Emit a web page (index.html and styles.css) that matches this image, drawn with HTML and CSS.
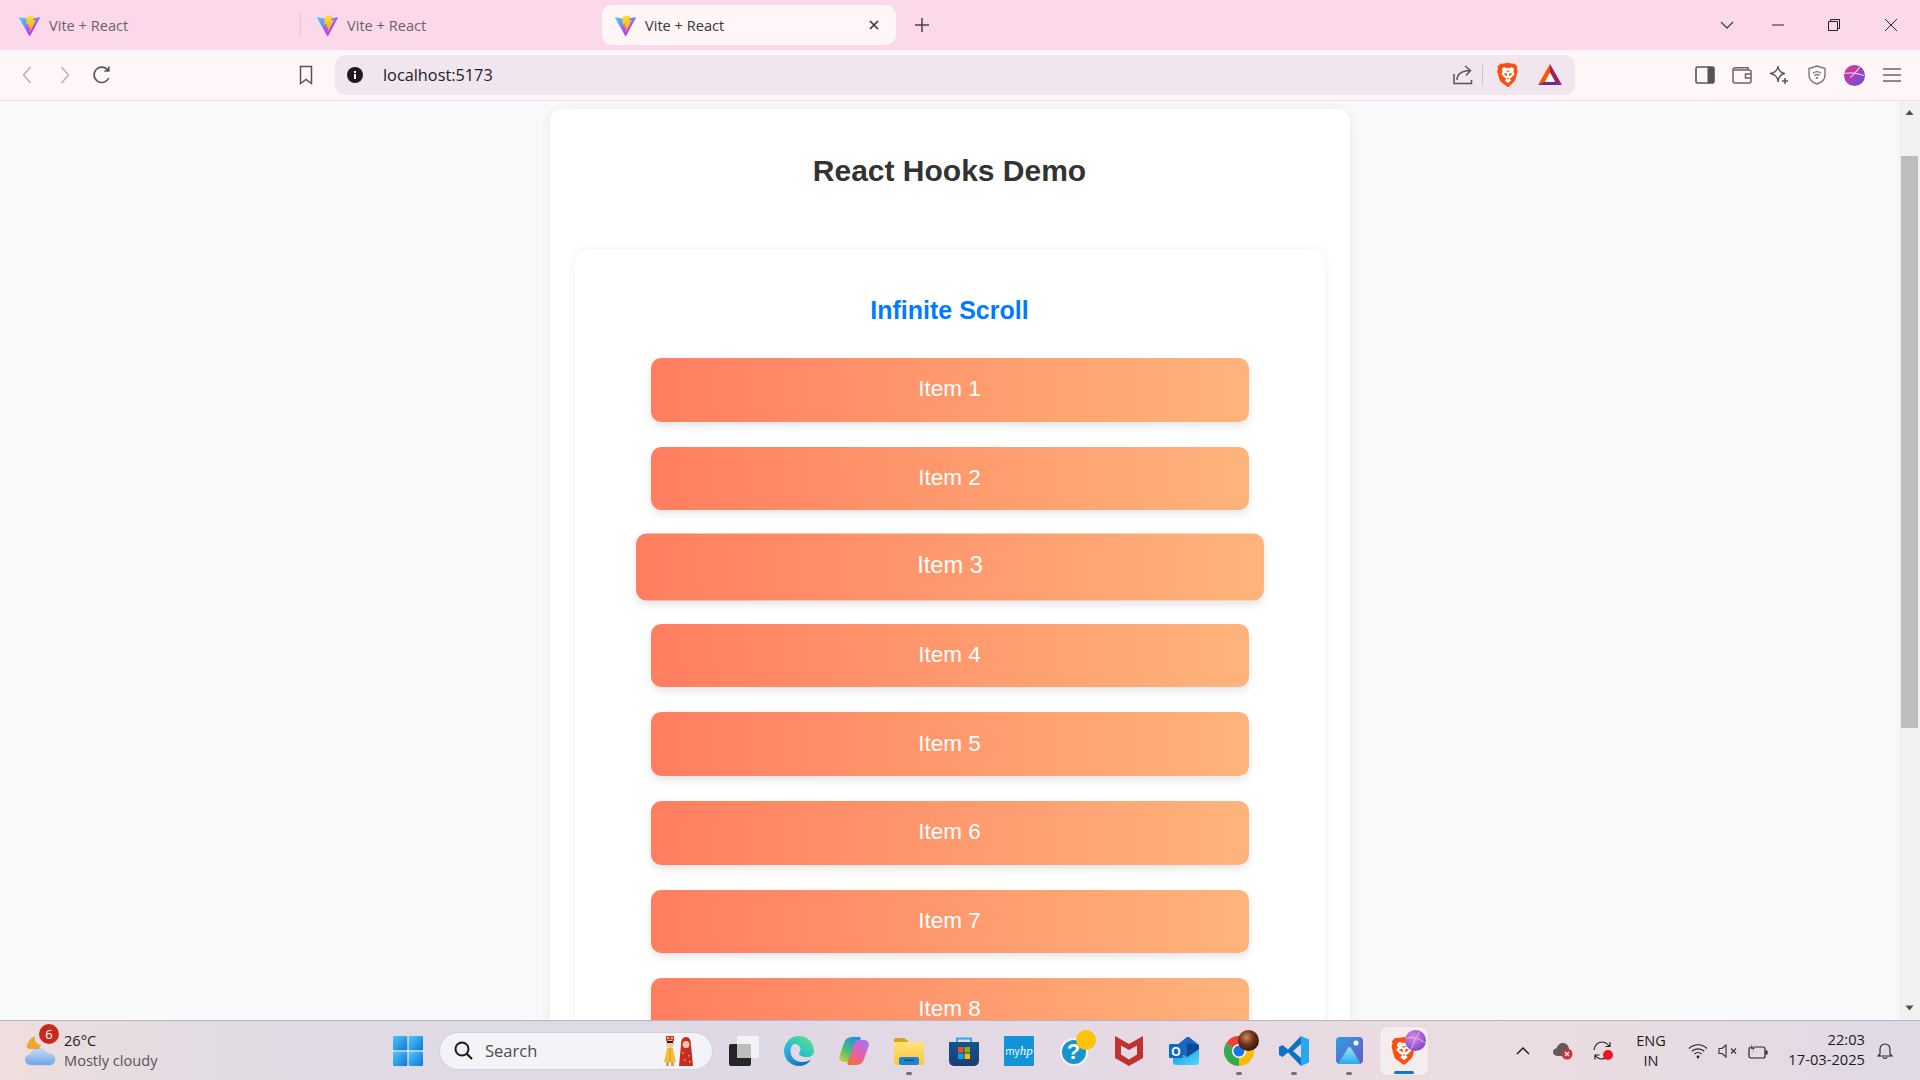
FILE: index.html
```html
<!DOCTYPE html>
<html lang="en">
<head>
<meta charset="utf-8">
<title>Vite + React</title>
<link rel="stylesheet" href="styles.css">
</head>
<body>
<svg class="sprite" aria-hidden="true">
  <defs>
    <linearGradient id="va" x1="-.8%" x2="57.6%" y1="7.7%" y2="78.4%"><stop offset="0" stop-color="#41D1FF"/><stop offset="1" stop-color="#BD34FE"/></linearGradient>
    <linearGradient id="vb" x1="43.4%" x2="50.3%" y1="2.2%" y2="89%"><stop offset="0" stop-color="#FFEA83"/><stop offset=".08" stop-color="#FFDD35"/><stop offset="1" stop-color="#FFA800"/></linearGradient>
    <symbol id="vite" viewBox="0 0 256 257">
      <path fill="url(#va)" d="M255.153 37.938 134.897 252.976c-2.483 4.44-8.862 4.466-11.382.048L.875 37.958c-2.746-4.814 1.371-10.646 6.827-9.67l120.385 21.517a6.537 6.537 0 0 0 2.322-.004l117.867-21.483c5.438-.991 9.574 4.796 6.877 9.62Z"/>
      <path fill="url(#vb)" d="M185.432.063 96.44 17.501a3.268 3.268 0 0 0-2.634 3.014l-5.474 92.456a3.268 3.268 0 0 0 3.997 3.378l24.777-5.718c2.318-.535 4.413 1.507 3.936 3.838l-7.361 36.047c-.495 2.426 1.782 4.5 4.151 3.78l15.304-4.649c2.372-.72 4.652 1.36 4.15 3.788l-11.698 56.621c-.732 3.542 3.979 5.473 5.943 2.437l1.313-2.028 72.516-144.72c1.215-2.423-.88-5.186-3.54-4.672l-25.505 4.922c-2.396.462-4.435-1.77-3.759-4.114l16.646-57.705c.677-2.35-1.37-4.583-3.769-4.113Z"/>
    </symbol>
    <symbol id="brave" viewBox="0 0 24 24">
      <path fill="#f9500f" d="M12 .8 15.6 1.6 18 1.4l2.8 3-.7 1.5.9 2.4-2 7.4c-.4 1.5-1 2.3-2.2 3.2L13 22.6c-.6.4-1.4.4-2 0l-4.8-3.7c-1.200-.9-1.800-1.700-2.200-3.200L2 8.300l.9-2.400-.7-1.500L5 1.400l2.400.2z"/>
      <path fill="#fff" d="M12 5.600c-1.500 0-3-.8-4-.7L6.300 6.500l.8 2.800-1.300 1.800 3 3.300 1.800.8-1.500 1.800L12 19.300l2.900-2.300-1.500-1.800 1.800-.8 3-3.300-1.300-1.800.8-2.800L16 4.900c-1 -.1-2.500.7-4 .7z"/>
      <path fill="#f9500f" d="M10.700 13.200 8 10.800l2.700-.6.4 1.800zM13.300 13.200l2.700-2.400-2.700-.6-.4 1.800zM10.500 7.600 12 8.300l1.500-.7-.3 1.500h-2.400zM10.800 14.800h2.400L12 16.200z"/>
    </symbol>
    <linearGradient id="edgeA" x1="0" y1="0" x2="1" y2="1"><stop offset="0" stop-color="#33c3e8"/><stop offset="1" stop-color="#0f5fb0"/></linearGradient>
    <linearGradient id="edgeB" x1="0" y1="1" x2="1" y2="0"><stop offset="0" stop-color="#1e9fd8"/><stop offset=".55" stop-color="#2fd0b8"/><stop offset="1" stop-color="#7edb6f"/></linearGradient>
    <linearGradient id="copA" x1="0" y1="1" x2=".7" y2="0"><stop offset="0" stop-color="#e8c93a"/><stop offset=".45" stop-color="#4cc46c"/><stop offset="1" stop-color="#1f8fe8"/></linearGradient>
    <linearGradient id="copB" x1=".2" y1="1" x2=".8" y2="0"><stop offset="0" stop-color="#f4713a"/><stop offset=".5" stop-color="#e35fb0"/><stop offset="1" stop-color="#a874f0"/></linearGradient>
    <linearGradient id="folder" x1="0" y1="0" x2="0" y2="1"><stop offset="0" stop-color="#ffe27a"/><stop offset="1" stop-color="#fcc73d"/></linearGradient>
    <linearGradient id="store" x1="0" y1="0" x2="0" y2="1"><stop offset="0" stop-color="#14548f"/><stop offset="1" stop-color="#1c3d72"/></linearGradient>
    <linearGradient id="outl" x1="0" y1="0" x2="1" y2="1"><stop offset="0" stop-color="#1490df"/><stop offset="1" stop-color="#50d9ff"/></linearGradient>
    <linearGradient id="photo" x1="0" y1="0" x2="1" y2="1"><stop offset="0" stop-color="#2ba0e6"/><stop offset="1" stop-color="#6c58c0"/></linearGradient>
    <linearGradient id="mount" x1="0" y1="0" x2="0" y2="1"><stop offset="0" stop-color="#9ce9f4"/><stop offset="1" stop-color="#2aa8ea"/></linearGradient>
    <linearGradient id="cloud" x1="0" y1="0" x2="0" y2="1"><stop offset="0" stop-color="#c8dcf6"/><stop offset="1" stop-color="#6ea4e6"/></linearGradient>
    <linearGradient id="win" x1="0" y1="0" x2="1" y2="1"><stop offset="0" stop-color="#4fc8fa"/><stop offset="1" stop-color="#0a78d4"/></linearGradient>
    <linearGradient id="globeG" x1="0" y1="0" x2="1" y2="1"><stop offset="0" stop-color="#e8329a"/><stop offset="1" stop-color="#5a55d8"/></linearGradient>
    <radialGradient id="bead" cx=".4" cy=".35" r=".7"><stop offset="0" stop-color="#c98a5e"/><stop offset=".5" stop-color="#6e3518"/><stop offset="1" stop-color="#2d1408"/></radialGradient>
    <radialGradient id="ball" cx=".4" cy=".35" r=".75"><stop offset="0" stop-color="#d58adf"/><stop offset="1" stop-color="#7a3fc8"/></radialGradient>
  </defs>
</svg>

<div class="screen">
  <header class="tabstrip">
    <div class="tab">
      <svg class="favicon" width="21" height="21"><use href="#vite"/></svg>
      <span class="tab-title">Vite + React</span>
    </div>
    <div class="tab tab-second">
      <svg class="favicon" width="21" height="21"><use href="#vite"/></svg>
      <span class="tab-title">Vite + React</span>
    </div>
    <div class="tab tab-active">
      <svg class="favicon" width="21" height="21"><use href="#vite"/></svg>
      <span class="tab-title">Vite + React</span>
      <svg class="tab-close" width="10" height="10" viewBox="0 0 10 10"><path d="M1 1l8 8M9 1L1 9" stroke="#333" stroke-width="1.600" fill="none"/></svg>
    </div>
    <svg class="new-tab" width="14" height="14" viewBox="0 0 14 14"><path d="M7 0v14M0 7h14" stroke="#444" stroke-width="1.500"/></svg>
    <div class="win-controls">
      <svg width="52" height="12" viewBox="0 0 52 12"><path d="M22 3l6 6 6-6" stroke="#444" stroke-width="1.300" fill="none"/></svg>
      <svg width="52" height="12" viewBox="0 0 52 12"><path d="M21 6h12" stroke="#222" stroke-width="1"/></svg>
      <svg width="60" height="14" viewBox="0 0 60 14"><path d="M25.500 3.500h9v9h-9zM27.500 3.500v-2h9v9h-2" stroke="#222" stroke-width="1" fill="none"/></svg>
      <svg width="56" height="14" viewBox="0 0 56 14"><path d="M22 1l12 12M34 1L22 13" stroke="#222" stroke-width="1" fill="none"/></svg>
    </div>
  </header>

  <nav class="toolbar">
    <div class="nav-slot"><svg width="10" height="18" viewBox="0 0 10 18"><path d="M8.500 1L1.500 9l7 8" stroke="#b5b1b3" stroke-width="1.500" fill="none"/></svg></div>
    <div class="nav-slot"><svg width="10" height="18" viewBox="0 0 10 18"><path d="M1.500 1l7 8-7 8" stroke="#b5b1b3" stroke-width="1.500" fill="none"/></svg></div>
    <div class="nav-slot nav-reload"><svg width="20" height="20" viewBox="0 0 20 20"><path d="M16.800 13a7.700 7.700 0 1 1-.6-7.500M16.800 1.500v4.500h-4.500" stroke="#555" stroke-width="1.600" fill="none"/></svg></div>
    <div class="nav-slot nav-bookmark"><svg width="14" height="20" viewBox="0 0 14 20"><path d="M1.500 1.500h11v17L7 14.500l-5.500 4z" stroke="#555" stroke-width="1.500" fill="none"/></svg></div>
    <div class="address">
      <svg class="addr-info" width="16" height="16" viewBox="0 0 16 16"><circle cx="8" cy="8" r="8" fill="#1d1a1c"/><rect x="7" y="7" width="2" height="5" fill="#fff"/><rect x="7" y="4" width="2" height="2" fill="#fff"/></svg>
      <span class="addr-text">localhost:5173</span>
      <svg class="addr-share" width="20" height="20" viewBox="0 0 20 20"><path d="M1 9v9.500h17.500V15M4 15c0-6 4-9 13-9.500M12 1l5.500 4.500L13 10.500" stroke="#555" stroke-width="1.500" fill="none"/></svg>
      <span class="addr-sep"></span>
      <svg class="addr-brave" width="26" height="26"><use href="#brave"/></svg>
      <svg class="addr-bat" width="24" height="22" viewBox="0 0 24 22">
        <path fill="#ff5000" d="M12 0 0 21l7-3 5-9z"/>
        <path fill="#9e1f63" d="M12 0l12 21-7-3-5-9z"/>
        <path fill="#662d91" d="M0 21l6-3h12l6 3z"/>
        <path fill="#fff" d="M12 8.500 17 17.500H7z"/>
      </svg>
    </div>
    <div class="actions">
      <div class="act-slot"><svg width="20" height="18" viewBox="0 0 20 18"><rect x="1" y="1" width="18" height="16" rx="1.500" fill="none" stroke="#555" stroke-width="1.600"/><rect x="12.500" y="1" width="6.500" height="16" fill="#555"/></svg></div>
      <div class="act-slot"><svg width="20" height="18" viewBox="0 0 20 18"><path d="M16 4V1.800H3a2 2 0 0 0-2 2V15a2 2 0 0 0 2 2h14a2 2 0 0 0 2-2V6a2 2 0 0 0-2-2H2M19 8h-5.500v4H19" stroke="#666" stroke-width="1.500" fill="none"/></svg></div>
      <div class="act-slot"><svg width="20" height="20" viewBox="0 0 20 20"><path d="M9 1.500c.6 4 2.500 6 6.500 7-4 1-6 3-6.500 8-.6-5-2.500-7-7.500-8 5-1 6.900-3 7.500-7z" stroke="#555" stroke-width="1.500" fill="none" stroke-linejoin="round"/><path d="M16 13v6M13 16h6" stroke="#555" stroke-width="1.500"/></svg></div>
      <div class="act-slot"><svg width="18" height="20" viewBox="0 0 18 20"><path d="M9 1l8 2.500V10c0 4.500-3.500 7.500-8 9-4.500-1.500-8-4.500-8-9V3.500z" stroke="#777" stroke-width="1.400" fill="none"/><path d="M5 8.200c2.500-2 5.500-2 8 0M6.500 10.500c1.500-1.200 3.500-1.200 5 0" stroke="#777" stroke-width="1.300" fill="none"/><circle cx="9" cy="13" r="1.100" fill="#777"/></svg></div>
      <div class="act-slot act-globe"><svg width="21" height="21" viewBox="0 0 20 20"><circle cx="10" cy="10" r="10" fill="url(#globeG)"/><path d="M1 8c5-1 10-1 18 2M6 12c4-4 7-7 9-10" stroke="#f6c6e0" stroke-width="1" fill="none"/></svg></div>
      <div class="act-slot"><svg width="18" height="14" viewBox="0 0 18 14"><path d="M0 1h18M0 7h18M0 13h18" stroke="#666" stroke-width="1.500"/></svg></div>
    </div>
  </nav>

  <div class="viewport">
    <main class="page">
      <section class="card">
        <h1 class="title">React Hooks Demo</h1>
        <section class="panel">
          <h2 class="subtitle">Infinite Scroll</h2>
          <ul class="list">
            <li class="item">Item 1</li>
            <li class="item">Item 2</li>
            <li class="item item-hover">Item 3</li>
            <li class="item">Item 4</li>
            <li class="item">Item 5</li>
            <li class="item">Item 6</li>
            <li class="item">Item 7</li>
            <li class="item">Item 8</li>
          </ul>
        </section>
      </section>
    </main>
    <aside class="scrollbar">
      <svg class="sb-arrow" width="21" height="17" viewBox="0 0 21 17"><path d="M6.500 14l4-5 4 5z" fill="#505050"/></svg>
      <div class="sb-track"><div class="sb-thumb"></div></div>
      <svg class="sb-arrow" width="21" height="17" viewBox="0 0 21 17"><path d="M6.500 2.500l4 5 4-5z" fill="#505050"/></svg>
    </aside>
  </div>

  <footer class="taskbar">
    <div class="weather">
      <div class="weather-icon">
        <svg width="34" height="34" viewBox="0 0 34 34">
          <path fill="#eea735" d="M10 3c-1 4 1 8 6 9l-2 4H6C2 16 1 15 2 12 3 8 6 5 10 3z"/>
          <path fill="url(#cloud)" stroke="#8fb6ea" stroke-width=".6" d="M7 32C2 32 0 29 0 26.500 0 24 2 22 5 22c1-4 5-6 9-6 4 0 7 2 8 5 4-1 8 1 8 5.500 0 3-2 5.500-6 5.500z"/>
        </svg>
        <span class="weather-badge">6</span>
      </div>
      <div class="weather-text">
        <span class="w-temp">26°C</span>
        <span class="w-desc">Mostly cloudy</span>
      </div>
    </div>

    <div class="tb-slot">
      <svg width="30" height="30" viewBox="0 0 30 30"><rect x="0" y="0" width="14.300" height="14.300" rx="1" fill="url(#win)"/><rect x="15.700" y="0" width="14.300" height="14.300" rx="1" fill="url(#win)"/><rect x="0" y="15.700" width="14.300" height="14.300" rx="1" fill="url(#win)"/><rect x="15.700" y="15.700" width="14.300" height="14.300" rx="1" fill="url(#win)"/></svg>
    </div>
    <div class="search">
      <svg class="search-glass" width="19" height="19" viewBox="0 0 19 19"><circle cx="8" cy="8" r="6.500" fill="none" stroke="#1a1a1a" stroke-width="2"/><path d="M12.500 12.500L18 18" stroke="#1a1a1a" stroke-width="2.200"/></svg>
      <span class="search-text">Search</span>
      <svg class="search-art" width="32" height="30" viewBox="0 0 32 30">
        <path fill="#c9352a" d="M4 0h8v5H4z"/><path fill="#ffb43a" d="M5 1h2v2H5zM9 1h2v2H9z"/>
        <circle cx="8" cy="8" r="4" fill="#f2c9a4"/><path fill="#2a1a14" d="M5 5h6v2H5z"/>
        <path fill="#f0c23a" d="M5 12h6l3 14H2z"/>
        <path fill="#e89c1e" d="M7.300 12h1.400v14H7.300z"/>
        <path fill="#d8a070" d="M4 26h3v4H4zM9 26h3v4H9z"/>
        <path fill="#c92a26" d="M24 1c4 0 5 4 5 8l2 21H17l2-21c0-4 1-8 5-8z"/>
        <circle cx="24" cy="8.500" r="3.500" fill="#f2c9a4"/>
        <path fill="#f5b53a" d="M20 16h1.500v1.500H20zM26 19h1.500v1.500H26zM22 23h1.500v1.500H22zM27 25h1.500v1.500H27z"/>
      </svg>
    </div>

    <div class="tb-slot">
      <svg width="30" height="30" viewBox="0 0 30 30"><rect x="8" y="0" width="22" height="22" rx="2" fill="#f5f4f6" opacity=".9"/><rect x="0" y="8" width="22" height="22" rx="2" fill="#262626"/><rect x="8" y="8" width="14" height="14" fill="#bdbcbf"/></svg>
    </div>
    <div class="tb-slot">
      <svg width="30" height="30" viewBox="0 0 30 30">
        <path fill="url(#edgeA)" d="M15 30C6.500 30 0 23 0 14.500 0 10 5 7.500 9.500 8c-3.500 3-3.800 8-1.800 12 2 4 6.500 6 11 6 3.500 0 6-1 8.300-2.800C24.500 27.500 20.500 30 15 30z"/>
        <path fill="url(#edgeB)" d="M0 14.500C.8 6 7 0 15 0c9 0 15 7 15 15.500 0 3.500-3 5.500-7 5.500-4.500 0-8-1.500-8-3.500 0-1 1.500-1.500 1.500-4 0-3.500-3-5.500-7-5.500C5 8 1.500 10.500 0 14.500z"/>
      </svg>
    </div>
    <div class="tb-slot">
      <svg width="30" height="30" viewBox="0 0 30 30">
        <path fill="url(#copA)" d="M13 1h7c1.500 0 2 1 1.500 2L15 22c-.8 2.500-2.500 4-5 4H5c-3.500 0-5.500-3-4.500-6.500L5 7C6.200 3 9 1 13 1z"/>
        <path fill="url(#copB)" d="M17 29h-7c-1.500 0-2-1-1.500-2L15 8c.8-2.500 2.500-4 5-4h5c3.500 0 5.500 3 4.500 6.500L25 23c-1.200 4-4 6-8 6z"/>
      </svg>
    </div>
    <div class="tb-slot tb-open">
      <svg width="30" height="28" viewBox="0 0 30 28">
        <path fill="#d9a21f" d="M0 3a2 2 0 0 1 2-2h8l4 3v6H0z"/>
        <path fill="url(#folder)" d="M0 5h28a2 2 0 0 1 2 2v19a2 2 0 0 1-2 2H2a2 2 0 0 1-2-2z"/>
        <rect x="5" y="20" width="20" height="8" rx="2" fill="#1d82d0"/><rect x="10" y="22.500" width="10" height="1.500" fill="#0b4d8a"/>
      </svg>
    </div>
    <div class="tb-slot">
      <svg width="30" height="30" viewBox="0 0 30 30">
        <path d="M8 7V2.500h14V7" stroke="#2fa8e8" stroke-width="2" fill="none"/>
        <path fill="url(#store)" d="M0 6h30v19a5 5 0 0 1-5 5H5a5 5 0 0 1-5-5z"/>
        <rect x="9" y="11" width="5.500" height="5.500" fill="#f25022"/><rect x="15.500" y="11" width="5.500" height="5.500" fill="#7fba00"/><rect x="9" y="17.500" width="5.500" height="5.500" fill="#00a4ef"/><rect x="15.500" y="17.500" width="5.500" height="5.500" fill="#ffb900"/>
      </svg>
    </div>
    <div class="tb-slot">
      <div class="myhp"><span class="myhp-my">my</span><span class="myhp-hp">hp</span></div>
    </div>
    <div class="tb-slot tb-help">
      <div class="help-icon">?</div>
      <span class="dot-yellow"></span>
    </div>
    <div class="tb-slot">
      <svg width="28" height="30" viewBox="0 0 28 30"><path fill="#c0322f" d="M0 0l14 8 14-8v22l-14 8-14-8z"/><path fill="#e4d9e4" d="M6 9.500l8 4.500 8-4.500v9l-8 5-8-5z"/></svg>
    </div>
    <div class="tb-slot">
      <svg width="30" height="28" viewBox="0 0 30 28">
        <path fill="url(#outl)" d="M4 11h26v14a3 3 0 0 1-3 3H7a3 3 0 0 1-3-3z"/>
        <path fill="#1b66c0" d="M8 8l10-8 2 0 10 8v4L18 20 8 14z"/>
        <path fill="#0c4b94" d="M18 6l12 2v4L18 20z"/>
        <rect x="0" y="7" width="14" height="14" rx="1" fill="#0f6cbd"/>
        <text class="outlook-o" x="7" y="18.500" text-anchor="middle">O</text>
      </svg>
    </div>
    <div class="tb-slot tb-open tb-chrome">
      <svg width="30" height="30" viewBox="0 0 30 30">
        <path fill="#ea4335" d="M15 15L2 7.500A15 15 0 0 1 28 7.500z"/>
        <path fill="#fbbc04" d="M15 15L28 7.500A15 15 0 0 1 15 30z"/>
        <path fill="#34a853" d="M15 15L15 30A15 15 0 0 1 2 7.500z"/>
        <circle cx="15" cy="15" r="7" fill="#fff"/><circle cx="15" cy="15" r="5.500" fill="#1a73e8"/>
      </svg>
      <svg class="overlay-dot" width="21" height="21" viewBox="0 0 20 20"><circle cx="10" cy="10" r="10" fill="url(#bead)"/></svg>
    </div>
    <div class="tb-slot tb-open">
      <svg width="30" height="30" viewBox="0 0 30 30">
        <path fill="#0e72c2" d="M22 0L9 13.500 3.500 9 0 11v8l3.500 2L9 16.500 22 30z"/>
        <path fill="#2aa7ee" d="M22 0l8 3.500v23L22 30z"/>
        <path fill="#e4d9e4" d="M22 8l-8 7 8 7z"/>
      </svg>
    </div>
    <div class="tb-slot tb-open">
      <svg width="27" height="27" viewBox="0 0 27 27">
        <rect width="27" height="27" rx="4" fill="url(#photo)"/>
        <circle cx="20" cy="6" r="2.500" fill="#fff"/>
        <path fill="url(#mount)" d="M2 27L12 11c1-1.500 2-1.500 3 0l10 16z"/>
      </svg>
    </div>
    <div class="tb-slot tb-active">
      <svg width="30" height="30"><use href="#brave"/></svg>
      <svg class="overlay-dot" width="21" height="21" viewBox="0 0 20 20"><circle cx="10" cy="10" r="10" fill="url(#ball)"/><path d="M1 8c6-2 12 0 18 4M6 18c2-6 5-12 8-16" stroke="#e9bfe8" stroke-width=".8" fill="none"/></svg>
      <span class="active-bar"></span>
    </div>

    <div class="tray">
      <div class="tray-slot"><svg width="14" height="8" viewBox="0 0 14 8"><path d="M1 7l6-6 6 6" stroke="#222" stroke-width="1.500" fill="none"/></svg></div>
      <div class="tray-slot"><svg width="20" height="18" viewBox="0 0 20 18"><path fill="#5e5b60" d="M5 14c-3 0-5-1.500-5-4 0-2 1.500-3.500 3.500-3.700C4.500 3 7 1 9.500 1c3 0 5 1.500 6 4l1 4-6 5z"/><circle cx="14" cy="12" r="5.500" fill="#d1323f"/><path d="M12 10l4 4M16 10l-4 4" stroke="#fff" stroke-width="1.200"/></svg></div>
      <div class="tray-slot"><svg width="20" height="20" viewBox="0 0 20 20"><path d="M1 9C1.500 4 5 1 9 1c3 0 5 1 7 4M17 1v4.500h-4.500M16 11c-1 4-4 7-7 7-3 0-5-1-7-4M2 18.500V14h4.500" stroke="#222" stroke-width="1.200" fill="none"/><circle cx="15" cy="14" r="5" fill="#f0141e"/></svg></div>
      <div class="tray-lang"><span>ENG</span><span>IN</span></div>
      <div class="tray-slot tray-icon"><svg width="20" height="16" viewBox="0 0 20 16"><path d="M1 5.500c5-5 13-5 18 0M3.800 8.300c3.500-3.300 9-3.300 12.400 0M6.500 11c2-1.800 5-1.800 7 0" stroke="#222" stroke-width="1.200" fill="none"/><circle cx="10" cy="14" r="1.400" fill="#222"/></svg></div>
      <div class="tray-slot tray-icon"><svg width="20" height="14" viewBox="0 0 20 14"><path d="M1 4.500h3L8 1v12L4 9.500H1z" stroke="#333" stroke-width="1.100" fill="none"/><path d="M13 4.500l5 5M18 4.500l-5 5" stroke="#333" stroke-width="1.100"/></svg></div>
      <div class="tray-slot tray-icon"><svg width="20" height="16" viewBox="0 0 20 16"><rect x="1" y="4" width="16" height="11" rx="2" fill="none" stroke="#222" stroke-width="1.200"/><rect x="17.500" y="7.500" width="2" height="4" fill="#222"/><path d="M4 0L2 6h3l-1 5 3-7H4z" fill="#222" stroke="#ebdde4" stroke-width=".6"/></svg></div>
      <div class="clock"><span>22:03</span><span>17-03-2025</span></div>
      <div class="tray-slot"><svg width="16" height="18" viewBox="0 0 16 18"><path d="M3 12V7a5 5 0 0 1 10 0v5l2 2H1zM6 15c.3 2 3.700 2 4 0" stroke="#222" stroke-width="1.100" fill="none"/></svg></div>
    </div>
  </footer>
</div>
</body>
</html>
```

FILE: styles.css
```css
* { box-sizing: border-box; }
html, body { margin: 0; padding: 0; height: 100%; overflow: hidden; }
body { font-family: "Open Sans", "Noto Sans", sans-serif; color: #222; }
.sprite { position: absolute; width: 0; height: 0; overflow: hidden; }
.screen { display: flex; flex-direction: column; height: 100vh; }

/* Tab strip */
.tabstrip { display: flex; align-items: center; height: 50px; background: #fbd9ea; flex: none; }
.tab { display: flex; align-items: center; width: 300px; height: 40px; padding-left: 19px; flex: none; }
.tab-second { width: 302px; padding-left: 16px; border-left: 1px solid #e6c6d6; height: 24px; }
.tab-active { width: 294px; padding-left: 13px; background: #fff7f7; border-radius: 10px; position: relative; }
.favicon { flex: none; }
.tab-title { margin: -1px 0 0 9px; font-size: 14.600px; color: #6b6368; }
.tab-active .tab-title { color: #3a3438; }
.tab-close { margin-left: auto; margin-right: 17px; }
.new-tab { margin-left: 19px; flex: none; }
.win-controls { display: flex; align-items: center; margin-left: auto; padding-right: 1px; }

/* Toolbar */
.toolbar { display: flex; align-items: center; height: 51px; padding-left: 8px; background: #fff7f7; border-bottom: 1px solid #f5dfe6; flex: none; }
.nav-slot { display: flex; align-items: center; justify-content: center; width: 38px; height: 40px; flex: none; }
.nav-reload { width: 36px; }
.nav-bookmark { margin-left: 168px; width: 36px; }
.address { display: flex; align-items: center; width: 1240px; height: 40px; margin-left: 11px; padding-left: 12px; background: #f1e5ef; border-radius: 10px; flex: none; }
.addr-info { flex: none; }
.addr-text { margin-left: 20px; font-size: 16.300px; color: #222; }
.addr-share { margin-left: auto; flex: none; }
.addr-sep { width: 1px; height: 20px; background: #c9c2c8; margin-left: 9px; flex: none; }
.addr-brave { margin-left: 12px; flex: none; }
.addr-bat { margin-left: 17px; margin-right: 13px; flex: none; }
.actions { display: flex; align-items: center; margin-left: 111px; }
.act-slot { display: flex; align-items: center; justify-content: center; width: 37.400px; height: 30px; flex: none; }
.act-globe { padding-left: 1px; }

/* Page */
.viewport { display: flex; flex: 1; min-height: 0; background: #f8f9fa; }
.page { flex: 1; min-width: 0; overflow: hidden; font-family: "Liberation Sans", Arial, sans-serif; }
.card { width: 800px; margin: 8px auto 0; padding: 25px 25px 0; background: #fff; border-radius: 12px; box-shadow: 0 2px 12px rgba(0, 0, 0, .07); }
.title { margin: 18px 0 61px; font-size: 30px; line-height: 37px; font-weight: 700; text-align: center; color: #333; }
.panel { padding: 46px 76px 0; background: #fff; border-radius: 12px; box-shadow: 0 0 12px rgba(0, 0, 0, .06); }
.subtitle { margin: 0 0 34px; font-size: 25px; line-height: 28px; font-weight: 700; text-align: center; color: #007bff; }
.list { list-style: none; margin: 0; padding: 0; }
.item { display: flex; align-items: center; justify-content: center; height: 63.600px; margin-bottom: 25px; padding-bottom: 1px; font-size: 22.500px; color: #fff; background: linear-gradient(to right, #ff7e5f, #feb47b); border-radius: 10px; box-shadow: 0 4px 8px rgba(0, 0, 0, .1); }
.item-hover { transform: scale(1.05); }

/* Scrollbar */
.scrollbar { display: flex; flex-direction: column; width: 21px; background: #f1f1f1; flex: none; }
.sb-arrow { flex: none; }
.sb-track { flex: 1; padding: 38px 2px 0; }
.sb-thumb { height: 572px; background: #bdbdbd; }

/* Taskbar */
.taskbar { display: flex; align-items: center; height: 60px; flex: none; background: linear-gradient(to right, #efdedd 0, #e0dbe3 12%, #dfd9e5 40%, #e6d9e4 60%, #ecdde0 78%, #e0d9e6 100%); border-top: 1px solid #b9b3bb; }
.weather { display: flex; align-items: center; width: 380px; padding-left: 25px; flex: none; }
.weather-icon { position: relative; width: 34px; height: 34px; margin-top: -2px; flex: none; }
.weather-badge { position: absolute; left: 14px; top: -9px; display: flex; align-items: center; justify-content: center; width: 20px; height: 20px; border-radius: 50%; background: #c42b1c; color: #fff; font-size: 13px; }
.weather-text { display: flex; flex-direction: column; margin: -2px 0 0 5px; font-size: 14.600px; line-height: 20px; }
.w-temp { color: #1c1c1c; }
.w-desc { color: #555; }

.tb-slot { position: relative; display: flex; align-items: center; justify-content: center; width: 55px; height: 48px; flex: none; }
.search { display: flex; align-items: center; width: 274px; height: 38px; margin: 0 3.500px 0 4px; padding-left: 14px; background: #f4f3f7; border-radius: 19px; border: 1px solid #d5d0d8; flex: none; }
.search-glass { flex: none; }
.search-text { margin: -1px 0 0 12px; font-size: 16.500px; color: #4c4c4c; }
.search-art { margin-left: auto; margin-right: 18px; flex: none; }

.tb-open::after { content: ""; position: absolute; left: 50%; bottom: 0; width: 6px; height: 3px; margin-left: -3px; border-radius: 2px; background: #757178; }
.myhp { display: flex; align-items: center; justify-content: center; width: 30px; height: 30px; background: #1295d8; border-radius: 1px; color: #fff; }
.myhp-my { font-size: 10px; }
.myhp-hp { font-size: 13px; font-style: italic; font-family: "Liberation Serif", serif; }
.help-icon { display: flex; align-items: center; justify-content: center; width: 28px; height: 28px; border-radius: 50%; background: #1794cc; border: 2px solid #f2f2f2; color: #fff; font-family: "Liberation Sans", sans-serif; font-size: 22px; font-weight: 700; margin-right: 1px; margin-top: 2px; }
.dot-yellow { position: absolute; left: 29px; top: 3px; width: 20px; height: 20px; border-radius: 50%; background: #fdc40a; }
.overlay-dot { position: absolute; left: 26px; top: 3px; }
.tb-active { height: 48px; background: #f5ecee; border-radius: 6px; width: 48px; margin: 0 3.500px; box-shadow: 0 0 1px rgba(0, 0, 0, .2); }
.tb-active .overlay-dot { left: 25px; top: 3px; }
.active-bar { position: absolute; left: 14px; bottom: 1px; width: 20px; height: 3px; border-radius: 2px; background: #0a78d4; }
.outlook-o { font-family: "Liberation Sans", sans-serif; font-size: 12px; font-weight: 700; fill: #fff; }

.tray { display: flex; align-items: center; margin-left: auto; padding-right: 15px; flex: none; }
.tray-slot { display: flex; align-items: center; justify-content: center; width: 40px; height: 40px; flex: none; }
.tray-icon { width: 30px; }
.tray-lang { display: flex; flex-direction: column; align-items: center; width: 56px; margin-right: 3.500px; font-size: 14.500px; line-height: 20px; color: #1c1c1c; flex: none; }
.clock { display: flex; flex-direction: column; align-items: flex-end; width: 92.500px; margin-top: -3px; font-size: 14.700px; line-height: 20px; color: #1c1c1c; flex: none; }
```
